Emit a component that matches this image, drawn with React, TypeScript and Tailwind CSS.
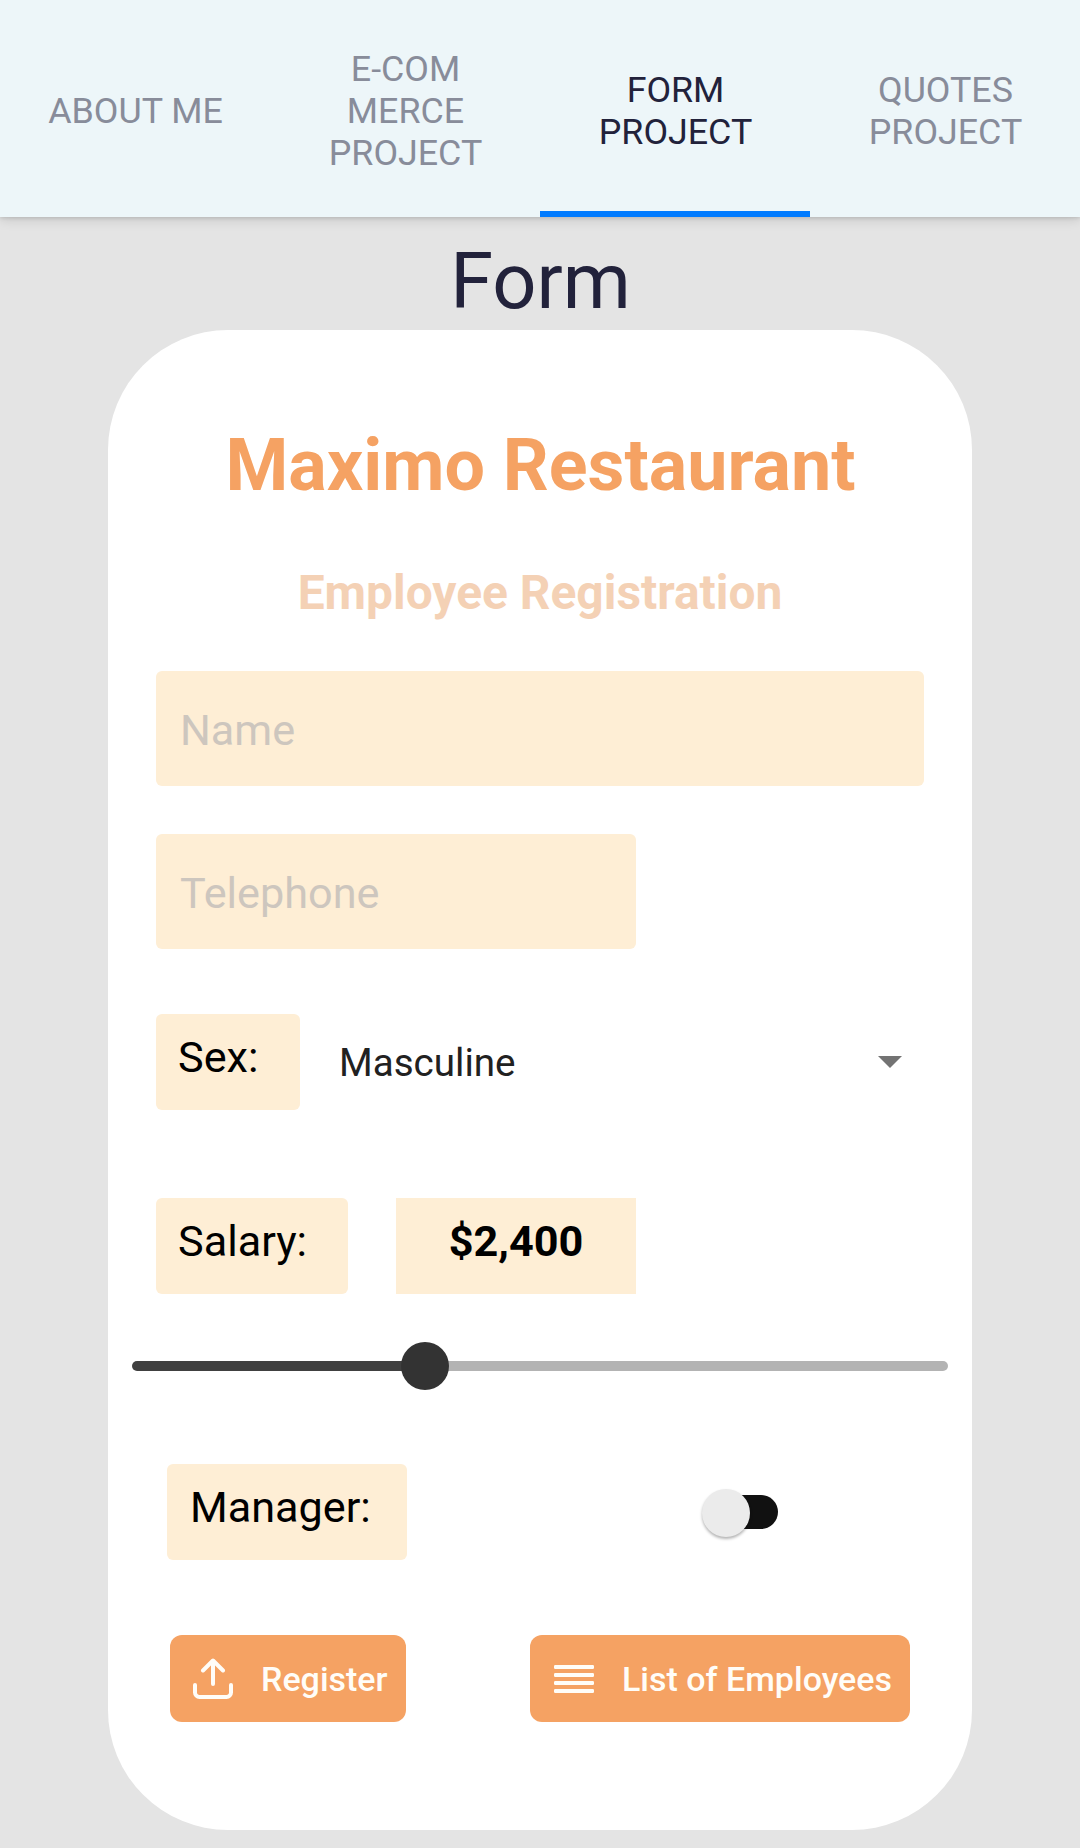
const tabs = [
  { lines: ["ABOUT ME"], active: false },
  { lines: ["E-COM", "MERCE", "PROJECT"], active: false },
  { lines: ["FORM", "PROJECT"], active: true },
  { lines: ["QUOTES", "PROJECT"], active: false },
];

function TabBar() {
  return (
    <nav className="relative grid h-[217px] grid-cols-4 bg-[#edf6f9] text-[35.8px] leading-[42px] shadow-[0_2px_12px_rgba(0,0,0,0.14),0_1px_4px_rgba(0,0,0,0.12)]">
      {tabs.map((tab) => (
        <button
          key={tab.lines.join("")}
          className={
            tab.active
              ? "flex flex-col items-center justify-center border-b-6 border-[#007bff] pt-[10px] pl-px text-[#22223b]"
              : "flex flex-col items-center justify-center border-b-6 border-transparent pt-[10px] pl-px text-[#888c9a]"
          }
        >
          {tab.lines.map((line) => (
            <span key={line}>{line}</span>
          ))}
        </button>
      ))}
    </nav>
  );
}

function UploadIcon() {
  return (
    <svg className="h-[42px] w-[40px]" viewBox="0 0 40 42" fill="none" stroke="currentColor" strokeWidth="4" strokeLinecap="round" strokeLinejoin="round">
      <path d="M20 26V3.5M10 12.5 20 2.5l10 10M2 27v7.5a4.5 4.5 0 0 0 4.5 4.5h27a4.5 4.5 0 0 0 4.5-4.5V27" />
    </svg>
  );
}

function ListIcon() {
  return (
    <svg className="h-[28px] w-[40px]" viewBox="0 0 40 28" fill="currentColor">
      <rect width="40" height="4" rx="1.2" />
      <rect y="8" width="40" height="4" rx="1.2" />
      <rect y="16" width="40" height="4" rx="1.2" />
      <rect y="24" width="40" height="4" rx="1.2" />
    </svg>
  );
}

export default function App() {
  return (
    <div className="flex h-[1848px] w-[1080px] flex-col overflow-hidden bg-[#e4e4e4] font-['Roboto',sans-serif]">
      <TabBar />
      <h1 className="h-[113px] pt-[17px] pl-px text-center text-[77.6px] leading-[96px] text-[#22223b]">Form</h1>

      <main className="mx-[108px] flex h-[1500px] flex-col rounded-[120px] bg-white px-6 pt-[94px] text-[43.2px] text-black">
        <h2 className="pl-px text-center text-[71.8px] leading-[84px] font-bold text-[#f5a263]">Maximo Restaurant</h2>
        <h3 className="mt-[57px] text-center text-[47.9px] leading-[56px] font-bold text-[#f4d1b5]">Employee Registration</h3>

        <div className="mt-[50px] flex flex-col gap-12 px-6">
          <input
            placeholder="Name"
            className="h-[115px] w-full rounded-md bg-[#feeed5] px-6 pt-[3px] placeholder:text-[#cdc6be]"
          />
          <input
            placeholder="Telephone"
            className="h-[115px] w-[480px] rounded-md bg-[#feeed5] px-6 pt-[3px] placeholder:text-[#cdc6be]"
          />
        </div>

        <div className="mt-[65px] flex px-6">
          <label className="flex h-24 w-36 items-center rounded-md bg-[#feeed5] pb-[7px] pl-[22px]">Sex:</label>
          <div className="ml-[39px] flex flex-1 items-center justify-between pt-[2px] pr-[22px] text-[38.6px] text-[#212121]">
            <span>Masculine</span>
            <svg className="mb-[3px] h-3 w-6" viewBox="0 0 24 12" fill="#737373">
              <path d="M0 0h24L12 12z" />
            </svg>
          </div>
        </div>

        <div className="mt-[88px] flex gap-12 px-6">
          <label className="flex h-24 w-48 items-center rounded-md bg-[#feeed5] pb-[7px] pl-[22px]">Salary:</label>
          <output className="flex h-24 w-60 items-center justify-center bg-[#feeed5] pb-[7px] font-bold">$2,400</output>
        </div>

        <div className="mt-12 flex h-12 items-center">
          <div className="h-[10px] w-[293px] rounded-l-full bg-[#404040]" />
          <div className="z-10 -mx-6 size-12 rounded-full bg-[#333333]" />
          <div className="h-[10px] flex-1 rounded-r-full bg-[#b3b3b3]" />
        </div>

        <div className="mt-[74px] flex items-center justify-between pr-[170px] pl-[35px]">
          <label className="flex h-24 w-60 items-center rounded-md bg-[#feeed5] pb-[7px] pl-[23px]">Manager:</label>
          <div className="flex items-center">
            <div className="z-10 mt-px size-12 rounded-full bg-[#ebebeb] shadow-[0_2px_3px_rgba(0,0,0,0.3)]" />
            <div className="-ml-[37px] h-[34px] w-[65px] rounded-full bg-[#111111]" />
          </div>
        </div>

        <div className="mt-[75px] flex justify-between pr-[38px] pl-[38px] text-[34px] font-medium text-[#fffdf8]">
          <button className="flex h-[87px] w-[236px] items-center rounded-xl bg-[#f5a263] pl-[23px]">
            <UploadIcon />
            <span className="mt-[2px] ml-7">Register</span>
          </button>
          <button className="flex h-[87px] w-[380px] items-center rounded-xl bg-[#f5a263] pl-6">
            <ListIcon />
            <span className="mt-[2px] ml-7">List of Employees</span>
          </button>
        </div>
      </main>
    </div>
  );
}
